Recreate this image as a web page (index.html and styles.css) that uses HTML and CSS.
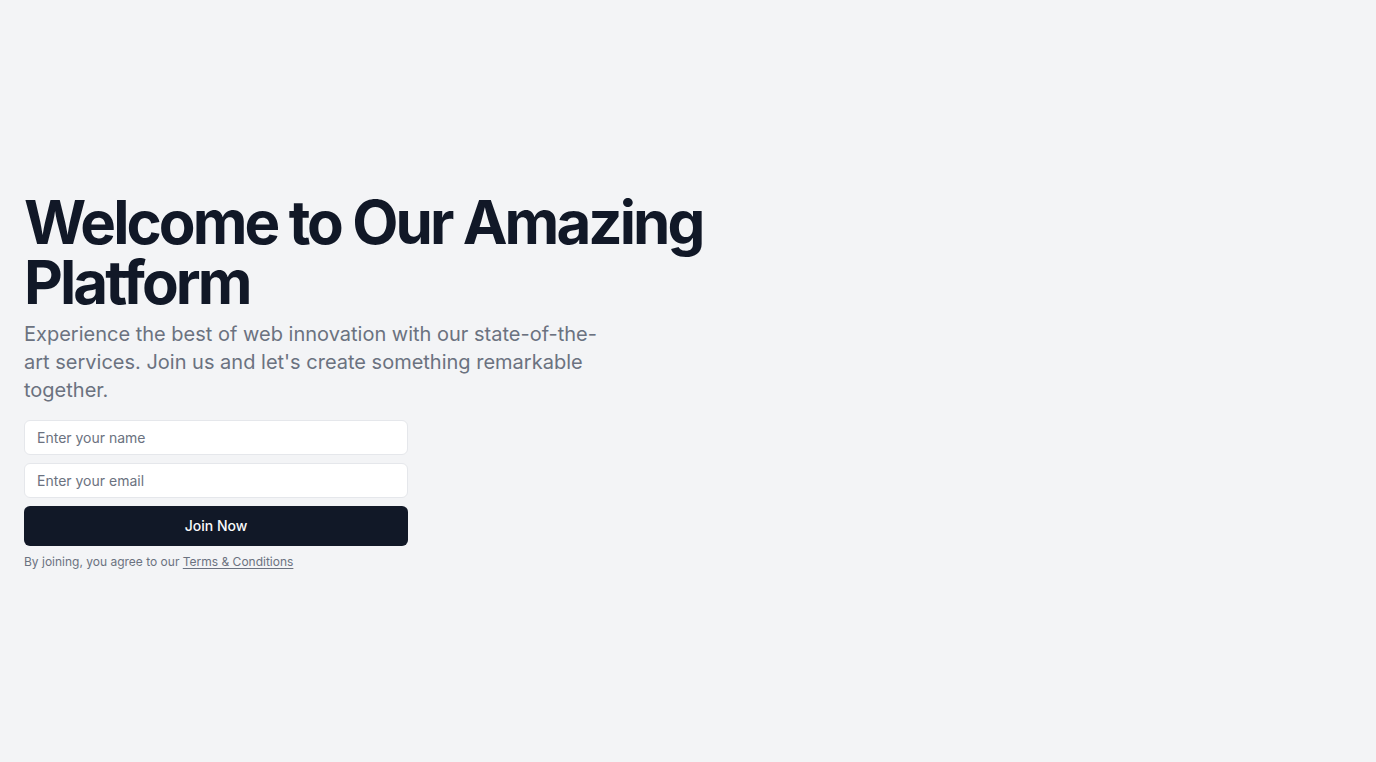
FILE: index.html
```html
<!DOCTYPE html>
<html lang="en">
<head>
<meta charset="utf-8">
<title>Welcome</title>
<link rel="stylesheet" href="styles.css">
</head>
<body>
<main class="hero">
  <div class="hero-content">
    <div class="intro">
      <h1 class="title">Welcome to Our Amazing Platform</h1>
      <p class="lead">Experience the best of web innovation with our state-of-the-art services. Join us and let's create something remarkable together.</p>
    </div>
    <form class="signup">
      <input class="field" type="text" placeholder="Enter your name">
      <input class="field" type="email" placeholder="Enter your email">
      <button class="join" type="button">Join Now</button>
      <p class="terms">By joining, you agree to our <a class="terms-link" href="#">Terms &amp; Conditions</a></p>
    </form>
  </div>
</main>
</body>
</html>
```

FILE: styles.css
```css
* { box-sizing: border-box; }
html, body { margin: 0; padding: 0; }
body {
  background: #f3f4f6;
  font-family: Inter, "Noto Sans", sans-serif;
  color: #111827;
}
.hero {
  min-height: 100vh;
  display: flex;
  align-items: center;
  padding: 0 24px;
}
.hero-content {
  display: flex;
  flex-direction: column;
  gap: 16px;
  width: 760px;
}
.intro {
  display: flex;
  flex-direction: column;
  gap: 8px;
}
.title {
  margin: 0;
  font-size: 60px;
  line-height: 60px;
  font-weight: 700;
  letter-spacing: -2.93px;
  color: #111827;
}
.lead {
  margin: 0;
  max-width: 594px;
  font-size: 20px;
  line-height: 28px;
  color: #6b7280;
}
.signup {
  display: flex;
  flex-direction: column;
  gap: 8px;
  width: 384px;
}
.field {
  height: 35px;
  border: 1px solid #e5e7eb;
  border-radius: 6px;
  background: #ffffff;
  padding: 0 12px;
  font-family: Inter, "Noto Sans", sans-serif;
  font-size: 14px;
  color: #111827;
  outline: none;
}
.field::placeholder { color: #6b7280; }
.join {
  height: 40px;
  border: none;
  border-radius: 6px;
  background: #111827;
  color: #f9fafb;
  font-family: Inter, "Noto Sans", sans-serif;
  font-size: 14px;
  font-weight: 500;
  line-height: 20px;
  padding: 0 0 1px;
  cursor: pointer;
}
.terms {
  margin: 0;
  font-size: 12px;
  line-height: 16px;
  color: #6b7280;
}
.terms-link {
  color: #6b7280;
  text-decoration: underline;
  text-underline-offset: 2px;
}
```
